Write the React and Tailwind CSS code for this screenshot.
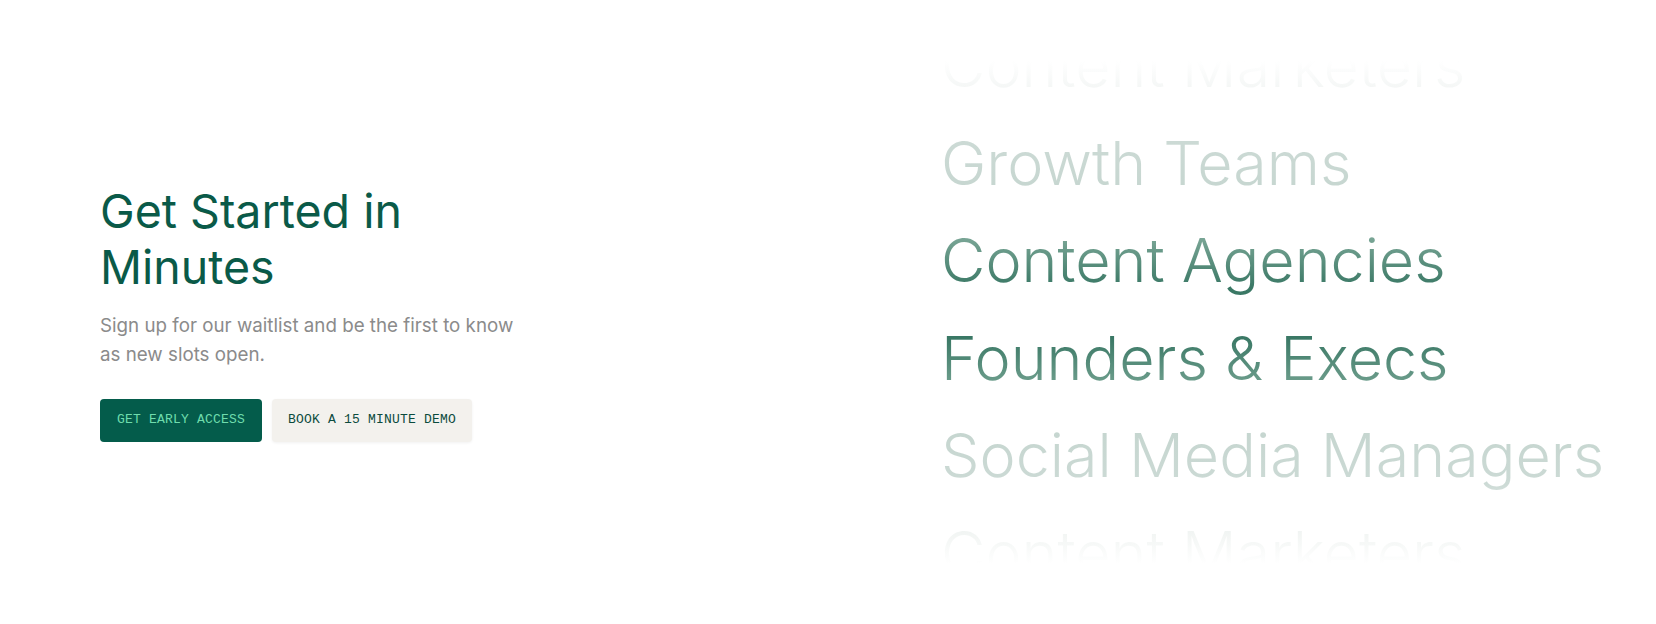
import React from "react";

const audiences = [
  "Content Marketers",
  "Growth Teams",
  "Content Agencies",
  "Founders & Execs",
  "Social Media Managers",
  "Content Marketers",
];

const App = () => {
  return (
    <div className="flex h-[624px] w-full items-center bg-white font-['Inter',sans-serif]">
      {/* Left: headline + call to action */}
      <div className="w-[941px] shrink-0 pl-[100px]">
        <div className="w-[425px]">
          <h1 className="text-[46.5px] font-normal leading-[56px] text-[#0a5a48]">
            Get Started in Minutes
          </h1>
          <p className="mt-[16px] text-[18.75px] leading-[29px] text-[#8b8b8b]">
            Sign up for our waitlist and be the first to know as new slots open.
          </p>
          <div className="mt-[30px] flex gap-[10px] font-['Liberation_Mono',monospace] text-[13px] tracking-[0.2px]">
            <button className="h-[43px] rounded-[4px] bg-[#045c4b] px-[17px] text-[#6fdcad]">
              GET EARLY ACCESS
            </button>
            <button className="h-[43px] rounded-[4px] bg-[#f3f1ed] px-[16px] text-[#0b4b3d] shadow-[0_1px_3px_rgba(0,0,0,0.06)]">
              BOOK A 15 MINUTE DEMO
            </button>
          </div>
        </div>
      </div>

      {/* Right: rotating audience list */}
      <div className="flex h-[503px] flex-1 flex-col justify-center overflow-hidden whitespace-nowrap bg-[linear-gradient(180deg,#ffffff_0%,#f1f4f3_7%,#ccdad5_16%,#c6d6d0_26%,#7aa696_35%,#3a7865_45%,#3a7865_55%,#72a190_65%,#c6d6d0_74%,#ccdad5_84%,#eef2f0_92%,#ffffff_100%)] bg-clip-text pb-[5px] text-transparent">
        {audiences.map((label, i) => (
          <div key={i} className="text-[61px] font-light leading-[97.5px]">
            {label}
          </div>
        ))}
      </div>
    </div>
  );
};

export default App;
